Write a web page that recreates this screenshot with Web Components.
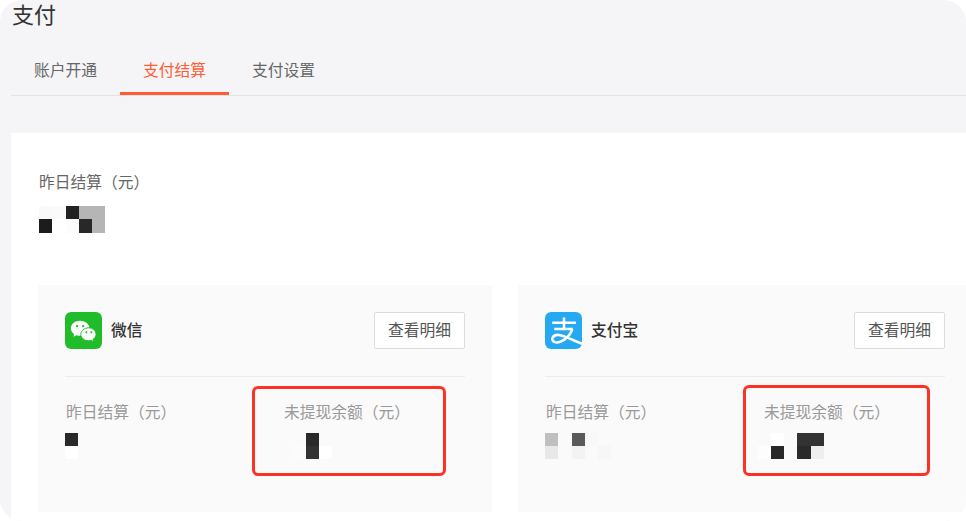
<!DOCTYPE html>
<html lang="zh">
<head>
<meta charset="utf-8">
<title>支付</title>
<style>
  html, body { margin: 0; padding: 0; background: #ffffff; }
  body {
    width: 966px;
    height: 521px;
    overflow: hidden;
    font-family: "Noto Sans CJK SC", "Liberation Sans", sans-serif;
  }
</style>
</head>
<body>
<pay-shell>
  <span slot="title">支付</span>
  <pay-tabs slot="tabs" active="1" items="账户开通,支付结算,支付设置"></pay-tabs>

  <span slot="label">昨日结算（元）</span>
  <pay-mosaic slot="amount" cells="f9 fa 22 b5 b5/1c ff fc 28 b5"></pay-mosaic>

  <channel-card slot="cards" name="微信">
    <svg slot="icon" width="37" height="37" viewBox="0 0 36 36">
      <rect width="36" height="36" rx="6" fill="#20bc2a"/>
      <path d="M14.5 8.5c-4.9 0-8.8 3.3-8.8 7.4 0 2.3 1.2 4.3 3.2 5.7l-.8 2.6 3-1.5c.9.3 1.6.4 2.6.5 1.2.1 2-.2 2-1 0-4.2 3.4-6.8 7.9-6.8h.4c-.8-3.9-4.6-6.9-9.5-6.9z" fill="#fff"/>
      <path d="M22.9 15.4c-4.1 0-7.5 2.8-7.5 6.3s3.4 6.3 7.5 6.3c.9 0 1.7-.1 2.5-.4l2.4 1.3-.6-2.2c1.8-1.2 3-3 3-5 0-3.5-3.3-6.3-7.3-6.3z" fill="#fff" stroke="#20bc2a" stroke-width=".9"/>
      <circle cx="11.7" cy="13.7" r="1.15" fill="#20bc2a"/>
      <circle cx="17.7" cy="13.7" r="1.15" fill="#20bc2a"/>
      <circle cx="20.8" cy="19.8" r="1" fill="#20bc2a"/>
      <circle cx="25.6" cy="19.8" r="1" fill="#20bc2a"/>
    </svg>
    <pay-stat slot="stats">
      <span slot="label">昨日结算（元）</span>
      <pay-mosaic slot="amount" cells="2a/ff"></pay-mosaic>
    </pay-stat>
    <pay-stat slot="stats" flag-left="-31" flag-top="-15" flag-width="194" flag-height="90">
      <span slot="label">未提现余额（元）</span>
      <pay-mosaic slot="amount" indent="9.4" cells="fa 2a fa/fb 33 ff"></pay-mosaic>
    </pay-stat>
  </channel-card>

  <channel-card slot="cards" name="支付宝">
    <svg slot="icon" width="37" height="37" viewBox="0 0 36 36">
      <rect width="36" height="36" rx="6" fill="#25a9f2"/>
      <path d="M7 10.5H30M18.5 5.3V17M9 16.6H27" fill="none" stroke="#fff" stroke-width="2.5"/>
      <path d="M26.6 16.6C23.5 25.5 14.5 31 9.5 29.3 4.6 27.4 7.6 21.6 13.8 22.3 20 23 26 27.5 36 30.8" fill="none" stroke="#fff" stroke-width="2.5"/>
    </svg>
    <pay-stat slot="stats">
      <span slot="label">昨日结算（元）</span>
      <pay-mosaic slot="amount" cells="bf fa 5a f8 fa/e8 fa f3 fa f7"></pay-mosaic>
    </pay-stat>
    <pay-stat slot="stats" flag-left="-20" flag-top="-16" flag-width="187" flag-height="91">
      <span slot="label">未提现余额（元）</span>
      <pay-mosaic slot="amount" indent="-5.5" cells="fa ff fa 33 33/fd 28 fa 2a ee"></pay-mosaic>
    </pay-stat>
  </channel-card>
</pay-shell>

<script>
// outer window: gray page with the white settlement panel
class PayShell extends HTMLElement {
  constructor() {
    super();
    this.attachShadow({ mode: 'open' }).innerHTML = `
      <style>
        :host {
          display: flex;
          flex-direction: column;
          box-sizing: border-box;
          width: 966px;
          height: 521px;
          padding-left: 11px;
          background: #f5f5f7;
          border-radius: 22px;
          overflow: hidden;
          color: #333;
        }
        .title {
          height: 28px;
          line-height: 32px;
          font-family: "Liberation Sans", "Noto Sans CJK SC", sans-serif;
          font-size: 22px;
          padding-left: 1px;
          color: #333;
        }
        .panel {
          flex: 1;
          min-height: 0;
          margin-top: 37px;
          padding: 38px 0 0 27px;
          background: #ffffff;
        }
        .label {
          height: 22px;
          line-height: 22px;
          font-size: 15.75px;
          color: #666;
          padding-left: 1px;
        }
        .amount {
          margin: 13px 0 0 1px;
        }
        .cards {
          display: grid;
          grid-template-columns: 454px 454px;
          column-gap: 26px;
          margin-top: 52px;
        }
      </style>
      <div class="title"><slot name="title"></slot></div>
      <slot name="tabs"></slot>
      <section class="panel">
        <div class="label"><slot name="label"></slot></div>
        <div class="amount"><slot name="amount"></slot></div>
        <div class="cards"><slot name="cards"></slot></div>
      </section>
    `;
  }
}

class PayTabs extends HTMLElement {
  constructor() {
    super();
    this.attachShadow({ mode: 'open' });
  }

  connectedCallback() {
    const items = (this.getAttribute('items') || '').split(',');
    const active = Number(this.getAttribute('active'));
    this.shadowRoot.innerHTML = `
      <style>
        :host {
          display: flex;
          box-sizing: border-box;
          height: 68px;
          padding-top: 23px;
          border-bottom: 1px solid #e2e2e4;
          font-size: 15.75px;
        }
        .tab {
          box-sizing: border-box;
          height: 44px;
          line-height: 37px;
          padding: 0 23px;
          color: #666;
        }
        .tab.on {
          color: #ff5c35;
          border-bottom: 3px solid #ff5c35;
        }
      </style>
      ${items.map((t, i) => `<div class="tab${i === active ? ' on' : ''}">${t}</div>`).join('')}
    `;
  }
}

// blurred amounts: rows split by "/", cells are gray levels in hex
class PayMosaic extends HTMLElement {
  constructor() {
    super();
    this.attachShadow({ mode: 'open' });
  }

  connectedCallback() {
    const rows = this.getAttribute('cells').split('/').map(r => r.split(' '));
    const indent = this.getAttribute('indent') || 0;
    this.shadowRoot.innerHTML = `
      <style>
        :host {
          display: grid;
          grid-template-columns: repeat(${rows[0].length}, 13.3px);
          grid-auto-rows: 13.3px;
          width: max-content;
          margin-left: ${indent}px;
        }
      </style>
      ${rows.flat().map(c => `<i style="background:#${c}${c}${c}"></i>`).join('')}
    `;
  }
}

class ChannelCard extends HTMLElement {
  constructor() {
    super();
    this.attachShadow({ mode: 'open' });
  }

  connectedCallback() {
    this.shadowRoot.innerHTML = `
      <style>
        :host {
          display: block;
          box-sizing: border-box;
          height: 227px;
          padding: 27px 27px 0;
          background: #fafafa;
        }
        .head {
          display: flex;
          align-items: center;
          height: 37px;
          padding-bottom: 27px;
          border-bottom: 1px solid #ececec;
        }
        ::slotted(svg) {
          display: block;
          flex: none;
        }
        .name {
          margin: 0 0 2px 9px;
          font-size: 15.75px;
          font-weight: 500;
          color: #333;
        }
        button {
          margin-left: auto;
          box-sizing: border-box;
          width: 91px;
          height: 37px;
          padding: 0 0 2px;
          background: #ffffff;
          border: 1px solid #dcdcdc;
          border-radius: 2px;
          font: inherit;
          font-size: 15.75px;
          color: #555;
        }
        .stats {
          display: grid;
          grid-template-columns: 218px 1fr;
          padding-top: 24px;
        }
      </style>
      <div class="head">
        <slot name="icon"></slot>
        <span class="name">${this.getAttribute('name')}</span>
        <button type="button">查看明细</button>
      </div>
      <div class="stats"><slot name="stats"></slot></div>
    `;
  }
}

class PayStat extends HTMLElement {
  constructor() {
    super();
    this.attachShadow({ mode: 'open' });
  }

  connectedCallback() {
    const flag = ['left', 'top', 'width', 'height'].map(k => this.getAttribute('flag-' + k));
    this.shadowRoot.innerHTML = `
      <style>
        :host {
          display: block;
          position: relative;
        }
        .label {
          height: 22px;
          line-height: 22px;
          font-size: 15.75px;
          color: #999;
          padding-left: 1px;
        }
        .amount {
          margin-top: 10px;
        }
        /* red annotation drawn on top of the screenshot */
        .flag {
          position: absolute;
          box-sizing: border-box;
          border: 3px solid #ff3024;
          border-radius: 6px;
        }
      </style>
      <div class="label"><slot name="label"></slot></div>
      <div class="amount"><slot name="amount"></slot></div>
      ${flag[0] ? `<div class="flag" style="left:${flag[0]}px;top:${flag[1]}px;width:${flag[2]}px;height:${flag[3]}px"></div>` : ''}
    `;
  }
}

customElements.define('pay-shell', PayShell);
customElements.define('pay-tabs', PayTabs);
customElements.define('pay-mosaic', PayMosaic);
customElements.define('channel-card', ChannelCard);
customElements.define('pay-stat', PayStat);
</script>
</body>
</html>
